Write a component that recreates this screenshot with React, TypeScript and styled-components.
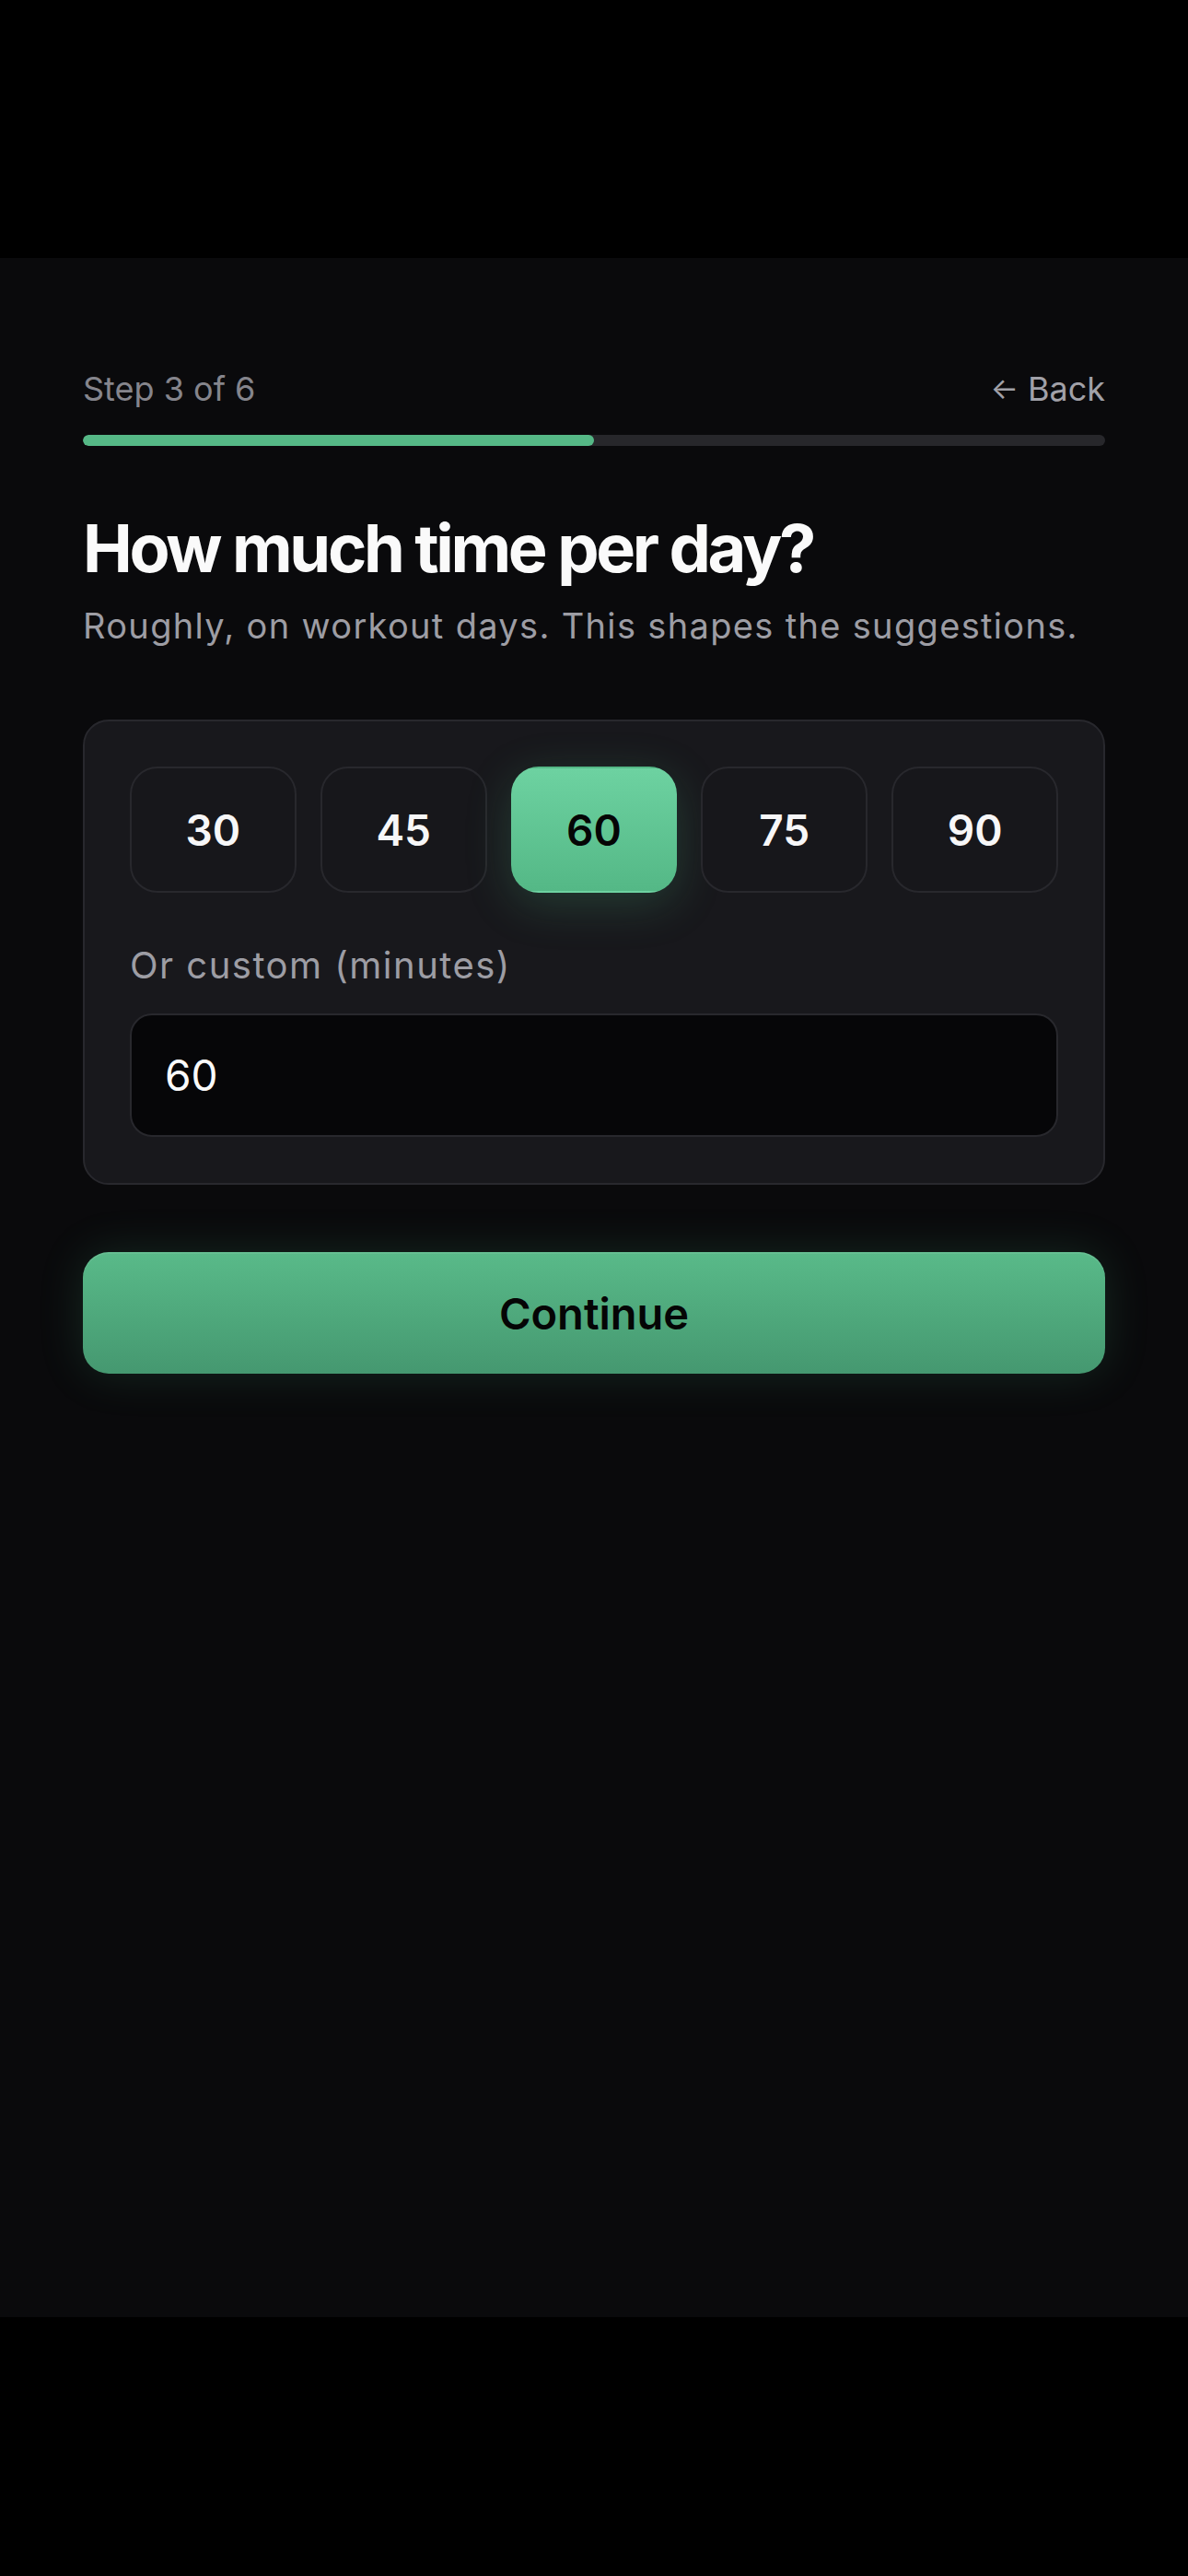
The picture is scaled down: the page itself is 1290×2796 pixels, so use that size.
import React, { useState } from 'react';
import styled, { createGlobalStyle } from 'styled-components';

const GlobalStyle = createGlobalStyle`
    html, body {
        margin: 0;
        padding: 0;
        background: #000;
    }
    body {
        font-family: Inter, "Noto Sans", "Liberation Sans", sans-serif;
        -webkit-font-smoothing: antialiased;
    }
    * {
        box-sizing: border-box;
    }
`;

const PRESETS = [30, 45, 60, 75, 90];

const App: React.FC = () => {
    const [minutes, setMinutes] = useState('60');
    const step = 3;
    const total = 6;

    return (
        <>
            <GlobalStyle />
            <Viewport>
                <Screen>
                    <TopRow>
                        <StepText>Step {step} of {total}</StepText>
                        <BackButton type="button">
                            <span>←</span> Back
                        </BackButton>
                    </TopRow>
                    <ProgressTrack>
                        <ProgressFill style={{ width: `${(step / total) * 100}%` }} />
                    </ProgressTrack>

                    <Title>How much time per day?</Title>
                    <Subtitle>Roughly, on workout days. This shapes the suggestions.</Subtitle>

                    <Card>
                        <ChipRow>
                            {PRESETS.map((p) => (
                                <Chip
                                    key={p}
                                    type="button"
                                    $active={String(p) === minutes}
                                    onClick={() => setMinutes(String(p))}
                                >
                                    {p}
                                </Chip>
                            ))}
                        </ChipRow>
                        <FieldLabel htmlFor="custom-minutes">Or custom (minutes)</FieldLabel>
                        <MinutesInput
                            id="custom-minutes"
                            inputMode="numeric"
                            value={minutes}
                            onChange={(e) => setMinutes(e.target.value)}
                        />
                    </Card>

                    <ContinueButton type="button">Continue</ContinueButton>
                </Screen>
            </Viewport>
        </>
    );
};

const Viewport = styled.div`
    min-height: 2796px;
    padding-top: 280px;
    background: #000;
`;

const Screen = styled.main`
    height: 2235px;
    background: #0a0a0c;
    padding: 121px 90px 0;
    display: flex;
    flex-direction: column;
`;

const TopRow = styled.div`
    display: flex;
    justify-content: space-between;
    align-items: center;
    height: 43px;
`;

const StepText = styled.span`
    font-size: 36px;
    line-height: 1.2;
    color: #85858c;
`;

const BackButton = styled.button`
    background: none;
    border: none;
    padding: 0;
    font-family: inherit;
    font-size: 36px;
    line-height: 1.2;
    color: #a1a1a8;
    display: flex;
    align-items: center;
    gap: 10px;

    span {
        font-size: 32px;
    }
`;

const ProgressTrack = styled.div`
    margin-top: 28px;
    height: 12px;
    border-radius: 6px;
    background: #27272b;
    overflow: hidden;
`;

const ProgressFill = styled.div`
    height: 100%;
    border-radius: 6px;
    background: #55b886;
`;

const Title = styled.h1`
    margin: 70px 0 0;
    font-size: 72px;
    line-height: 1.15;
    font-weight: 700;
    letter-spacing: -0.046em;
    color: #fafafa;
`;

const Subtitle = styled.p`
    margin: 19px 0 0;
    font-size: 38px;
    line-height: 1.25;
    letter-spacing: 0.035em;
    color: #9d9da4;
`;

const Card = styled.section`
    margin-top: 78px;
    border: 2px solid #28282d;
    border-radius: 28px;
    background: #18181c;
    padding: 49px 49px 50px;
    display: flex;
    flex-direction: column;
`;

const ChipRow = styled.div`
    display: grid;
    grid-template-columns: repeat(5, 1fr);
    gap: 26px;
`;

const Chip = styled.button<{ $active: boolean }>`
    height: 137px;
    border-radius: 30px;
    font-family: inherit;
    font-size: 46px;
    font-weight: 600;
    cursor: pointer;
    border: 2px solid ${(p) => (p.$active ? 'transparent' : '#28282d')};
    background: ${(p) => (p.$active ? 'linear-gradient(180deg, #6dd2a1 0%, #54b886 100%)' : '#17171b')};
    color: ${(p) => (p.$active ? '#050505' : '#f7f7f8')};
    box-shadow: ${(p) => (p.$active ? '0 12px 50px rgba(80, 190, 135, 0.22)' : 'none')};
`;

const FieldLabel = styled.label`
    margin-top: 55px;
    font-size: 40px;
    line-height: 1.2;
    letter-spacing: 0.037em;
    color: #9d9da4;
`;

const MinutesInput = styled.input`
    margin-top: 28px;
    height: 134px;
    border: 2px solid #28282d;
    border-radius: 24px;
    background: #060608;
    padding: 0 36px;
    font-family: inherit;
    font-size: 46px;
    color: #fafafa;
    outline: none;
`;

const ContinueButton = styled.button`
    margin-top: 73px;
    height: 132px;
    border: none;
    border-radius: 28px;
    background: linear-gradient(180deg, #59ba89 0%, #459870 100%);
    box-shadow: 0 0 50px rgba(80, 190, 135, 0.16), inset 0 2px 0 rgba(255, 255, 255, 0.08);
    font-family: inherit;
    font-size: 47px;
    font-weight: 600;
    color: #050505;
    cursor: pointer;
`;

export default App;
